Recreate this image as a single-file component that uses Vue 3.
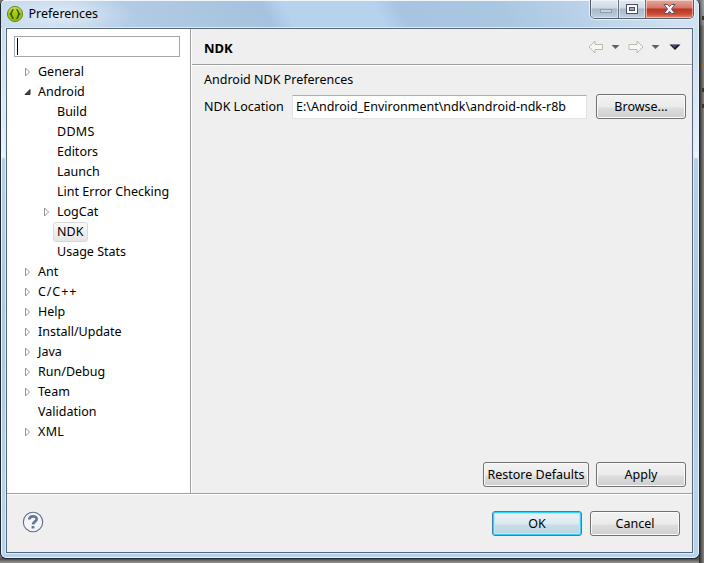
<script setup>
const rows = [
  { t: 'General', s: 'closed' },
  { t: 'Android', s: 'open' },
  { t: 'Build', l: 1 },
  { t: 'DDMS', l: 1, wide: true },
  { t: 'Editors', l: 1 },
  { t: 'Launch', l: 1 },
  { t: 'Lint Error Checking', l: 1 },
  { t: 'LogCat', l: 1, s: 'closed' },
  { t: 'NDK', l: 1, sel: true },
  { t: 'Usage Stats', l: 1 },
  { t: 'Ant', s: 'closed' },
  { t: 'C/C++', s: 'closed', loose: true },
  { t: 'Help', s: 'closed' },
  { t: 'Install/Update', s: 'closed' },
  { t: 'Java', s: 'closed' },
  { t: 'Run/Debug', s: 'closed' },
  { t: 'Team', s: 'closed' },
  { t: 'Validation' },
  { t: 'XML', s: 'closed', wide: true },
]
</script>

<template>
  <div class="desktop">
    <div class="behind"><i class="bit b1"></i><i class="bit b2"></i><i class="bit b3"></i><i class="bit b4"></i></div>
    <div class="window">
      <header class="titlebar">
        <svg class="logo" width="18" height="18" viewBox="0 0 18 18">
          <defs>
            <linearGradient id="lg" x1="0" y1="0" x2="0" y2="1">
              <stop offset="0" stop-color="#c5dc50" /><stop offset=".5" stop-color="#a0c814" /><stop offset="1" stop-color="#8fbc00" />
            </linearGradient>
          </defs>
          <circle cx="9" cy="9" r="7.6" fill="url(#lg)" stroke="#6d8a22" />
          <path d="M7.6 4.500C5.500 4.500 6.500 7.800 4.600 9C6.500 10.200 5.500 13.500 7.600 13.500M10.400 4.500C12.500 4.500 11.500 7.800 13.400 9C11.500 10.200 12.500 13.500 10.400 13.500" fill="none" stroke="#3e5210" stroke-width="1.500" />
        </svg>
        <span class="title">Preferences</span>
        <div class="controls">
          <div class="ctl min"><svg width="28" height="18"><rect x="9.5" y="9.5" width="11" height="3" fill="#c9d3dd" stroke="#8f9dac" /></svg></div>
          <div class="ctl max"><svg width="27" height="18"><rect x="7.5" y="4.5" width="11" height="9" fill="#fff" stroke="#4a5068" /><rect x="10.5" y="7.5" width="5" height="3" fill="#9ba9ba" stroke="#4a5068" /></svg></div>
          <div class="ctl close"><svg width="46" height="18"><path d="M18 4.5H21.5L23.5 6.7L25.5 4.5H29L25.5 9L29 13.5H25.5L23.5 11.3L21.5 13.5H18L21.5 9Z" fill="#f7f7f7" stroke="#57546a" /></svg></div>
        </div>
      </header>
      <div class="client">
        <div class="main">
          <aside class="tree">
            <div class="search"><span class="caret"></span></div>
            <div v-for="r in rows" :key="r.t" class="row" :class="{ child: r.l }">
              <span class="tw">
                <svg v-if="r.s === 'closed'" width="8" height="10"><path d="M1.5 1V9L5.5 5Z" fill="#fff" stroke="#949494" /></svg>
                <svg v-if="r.s === 'open'" width="8" height="10"><path d="M6 2.500V7.500H1Z" fill="#484848" stroke="#303030" /></svg>
              </span>
              <span class="label" :class="{ sel: r.sel, loose: r.loose, wider: r.wide }">{{ r.t }}</span>
            </div>
          </aside>
          <section class="page">
            <div class="head">
              <h1>NDK</h1>
              <svg class="nav" width="94" height="16" viewBox="0 0 94 16">
                <g fill="#f8f8f2" stroke="#b9b9b0" stroke-linejoin="round">
                  <path d="M2 8L8 2V5.500H15.500V10.500H8V14Z" />
                  <path d="M56 8L50 2V5.500H42V10.500H50V14Z" />
                </g>
                <path d="M24.500 6H32.500L28.500 10ZM64.500 6H72.500L68.500 10Z" fill="#606060" />
                <path d="M82.500 5.500H93.500L88 11Z" fill="#19162b" />
                <path d="M84.500 6H90.500L87.500 9Z" fill="#4b4288" />
              </svg>
            </div>
            <div class="body">
              <div class="desc">Android NDK Preferences</div>
              <div class="field">
                <span class="fl">NDK Location</span>
                <div class="input"><span>E:\Android_Environment\ndk\android-ndk-r8b</span></div>
                <button class="btn">Browse...</button>
              </div>
              <div class="actions">
                <button class="btn wide">Restore Defaults</button>
                <button class="btn">Apply</button>
              </div>
            </div>
          </section>
        </div>
        <footer class="foot">
          <svg width="22" height="22" viewBox="0 0 22 22">
            <circle cx="11" cy="11" r="9.700" fill="#f5f5f7" stroke="#5c6c8d" stroke-width="1.100" />
            <path d="M7.300 8.600C7.300 4.300 14.700 4.300 14.700 8.100C14.700 10.700 11 10.700 11 13.600" fill="none" stroke="#64769b" stroke-width="2.700" />
            <rect x="9.600" y="15" width="2.800" height="2.600" rx=".6" fill="#64769b" />
          </svg>
          <div class="fb">
            <button class="btn ok">OK</button>
            <button class="btn">Cancel</button>
          </div>
        </footer>
      </div>
    </div>
  </div>
</template>

<style>
body { margin: 0; overflow: hidden; }
</style>

<style scoped>
* { box-sizing: border-box; }
.desktop { position: relative; width: 704px; height: 563px; overflow: hidden; background: linear-gradient(180deg, #777 0, #777 557px, #4b4b4b 559px, #8c8989 562px); font: 12.5px/20px "Noto Sans", "Open Sans", sans-serif; color: #000; }
.behind { position: absolute; inset: 0 0 0 699px; background: linear-gradient(180deg, #ffffff44 0, #ffffff22 25px, #fff0 26px), linear-gradient(90deg, #222 0, #505050 2px, #858585 5px); }
.bit { position: absolute; left: 3px; width: 2px; height: 4px; background: #333; }
.b1 { top: 16px; }
.b2 { top: 64px; background: #93713d; }
.b3 { top: 88px; }
.b4 { top: 104px; background: #49301c; }
.window { position: relative; width: 700px; height: 559px; padding: 0 6px 5px 5px; border: 1px solid #20282f; border-top: 0; border-radius: 5px 5px 6px 6px; box-shadow: inset 0 0 0 1px #edf6ff; background: linear-gradient(180deg, #c3d7ec 0, #e5eff9 150px, #edf4fb 157px, #b3d0ec 159px, #abc8e4 340px, #b6d2ed 480px, #b5d2ef 100%); }
.titlebar { display: flex; align-items: flex-start; height: 28px; margin: 0 -5px; padding-left: 5px; background: radial-gradient(ellipse 75px 24px at 58px 14px, #e0ebf7 0, #dce9f600 100%), linear-gradient(62deg, #c5daee 0, #b5cde6 95px, #a8c4df 210px, #a6c2de 241px, #b6d2ed 260px, #b6d2ed 340px, #a8c4e0 361px, #aac7e2 450px, #b4cee6 500px, #d0e1f1 600px); border-top: 1px solid #f0f6fc; border-radius: 5px 5px 0 0; }
.logo { margin-top: 4px; flex: none; }
.title { margin: 3px 0 0 4.5px; line-height: 20px; white-space: nowrap; }
.controls { display: flex; width: 104px; height: 19px; margin: -1px 4px 0 auto; border: 1px solid #505b68; border-top: 0; border-radius: 0 0 5px 5px; overflow: hidden; box-shadow: 0 0 0 1px #e8f2fb; }
.ctl { height: 18px; box-shadow: inset 0 0 0 1px #ffffff77; background: linear-gradient(#e4ebf2 0, #cdd9e4 8px, #a8b8ca 9px, #c0cfdf 100%); }
.ctl svg { display: block; }
.min { width: 28px; border-right: 1px solid #69717c; }
.max { width: 27px; border-right: 1px solid #69717c; }
.close { flex: 1; background: linear-gradient(#e7a79b 0, #d27868 8px, #bc3421 9px, #c94b36 14px, #e48c73 100%); }
.client { width: 687px; height: 525px; border: 1px solid #56677a; box-shadow: 0 0 0 1px #dcecfb; background: #efefef; display: flex; flex-direction: column; }
.main { display: flex; height: 465px; border-bottom: 1px solid #a0a0a0; }
.tree { width: 184px; padding: 7px 0 0 7px; background: #fff; border-right: 1px solid #a0a0a0; }
.search { width: 166px; height: 21px; border: 1px solid #a6a8b0; padding: 1px 2px; margin-bottom: 5px; }
.caret { display: block; width: 1px; height: 17px; background: #000; }
.row { display: flex; align-items: center; height: 20px; padding-left: 10px; }
.row.child { padding-left: 29px; }
.tw { display: flex; width: 14px; height: 10px; }
.label { white-space: nowrap; line-height: 19px; height: 20px; }
.loose { letter-spacing: .9px; }
.wider { letter-spacing: .3px; }
.sel { margin-left: -4px; width: 35px; padding: 0 3px; border: 1px solid #d9d9d9; border-radius: 3px; background: linear-gradient(#fafafa, #e5e5e5); line-height: 17px; }
.page { flex: 1; border-left: 1px solid #fff; display: flex; flex-direction: column; }
.head { display: flex; justify-content: space-between; height: 36px; padding: 9px 11px 0 12px; border-bottom: 1px solid #a0a0a0; }
.nav { margin-top: 1px; }
h1 { margin: 0; font-size: 13px; line-height: 20px; }
.body { flex: 1; display: flex; flex-direction: column; padding: 4px 6px 6px 12px; border-top: 1px solid #fff; }
.desc { line-height: 19px; height: 20px; }
.field { display: flex; margin-top: 4px; align-items: flex-start; }
.fl { width: 88px; line-height: 25px; white-space: nowrap; }
.input { width: 295px; height: 24px; margin: 1px 9px 0 0; padding-left: 3px; border: 1px solid #e2e3ea; border-top-color: #abadb3; border-radius: 1px; background: #fff; line-height: 21px; white-space: nowrap; }
.btn { width: 90px; height: 25px; padding: 1px 0 0; border: 1px solid #707070; border-radius: 3px; box-shadow: inset 0 0 0 1px #fbfbfb; background: linear-gradient(#f2f2f2 0, #ebebeb 12px, #dddddd 13px, #cfcfcf 100%); font: inherit; line-height: 20px; color: #000; white-space: nowrap; flex: none; }
.actions { display: flex; justify-content: flex-end; gap: 7px; margin-top: auto; }
.wide { width: 106px; }
.foot { flex: 1; display: flex; justify-content: space-between; padding: 16px 12px 0 15px; border-top: 1px solid #fff; }
.fb { display: flex; gap: 8px; }
.ok { border-color: #3c7fb1; box-shadow: inset 0 0 0 1px #37d1f8, inset 0 0 0 2px #b4eaf8; background: linear-gradient(#edf5f9 0, #dce9f0 12px, #c9dce7 13px, #bad5e3 100%); }
</style>
